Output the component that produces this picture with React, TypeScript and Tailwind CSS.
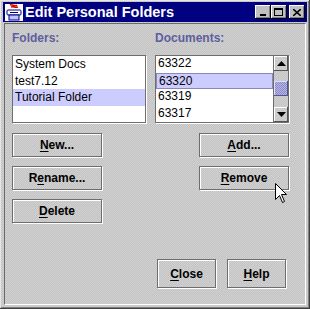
import React from "react";

const dither =
  "bg-[image:repeating-conic-gradient(#c2c2c2_0%_25%,#d2d2d2_0%_50%)] bg-[length:2px_2px]";

function Btn({
  children,
  className,
}: {
  children: React.ReactNode;
  className: string;
}) {
  return (
    <div
      className={
        "flex items-center justify-center border border-[#6e6e6e] shadow-[1px_1px_0_#ffffff,inset_1px_1px_0_#ffffff] text-[12px] font-bold text-black leading-none " +
        className
      }
    >
      {children}
    </div>
  );
}

function U({ c }: { c: string }) {
  return <span className="underline underline-offset-[2px]">{c}</span>;
}

function WinBtn({ children }: { children: React.ReactNode }) {
  return (
    <div className="w-[16px] h-[14px] bg-[#c0c0c0] shadow-[inset_-1px_-1px_0_#000000,inset_1px_1px_0_#ffffff,inset_-2px_-2px_0_#808080] flex items-center justify-center">
      {children}
    </div>
  );
}

function ScrollBtn({ up }: { up: boolean }) {
  return (
    <div className="h-[15px] bg-[#cccccc] shadow-[inset_-1px_-1px_0_#555555,inset_1px_1px_0_#ffffff] flex items-center justify-center">
      <svg width="9" height="5" viewBox="0 0 9 5">
        {up ? (
          <polygon points="4.5,0 9,5 0,5" fill="#000" />
        ) : (
          <polygon points="0,0 9,0 4.5,5" fill="#000" />
        )}
      </svg>
    </div>
  );
}

export default function App() {
  const folders = ["System Docs", "test7.12", "Tutorial Folder"];
  const docs = ["63322", "63320", "63319", "63317"];
  return (
    <div
      className={
        "relative w-[310px] h-[309px] flex flex-col pt-[2px] pl-[3px] pr-[3px] pb-[4px] shadow-[inset_-1px_-1px_0_#404040,inset_1px_1px_0_#e6e6e6,inset_-2px_-2px_0_#808080] " +
        dither
      }
      style={{ fontFamily: '"Liberation Sans", Arial, sans-serif' }}
    >
      {/* Title bar */}
      <div className="h-[20px] bg-[#000080] flex items-center pl-[2px] pr-[2px] shrink-0">
        <svg width="18" height="17" viewBox="0 0 18 17" className="shrink-0">
          <rect x="0" y="0" width="18" height="17" fill="#ffffff" />
          <path d="M5 1 C7 0 10 3 12 1 M6 3 C8 2 10 4 13 3" stroke="#e00000" strokeWidth="1.5" fill="none" />
          <rect x="2" y="6" width="14" height="5" rx="1" fill="#ffffff" stroke="#000080" strokeWidth="1" />
          <rect x="4" y="11" width="10" height="5" fill="#c0c0ff" stroke="#000080" strokeWidth="1" />
          <line x1="5" y1="8.5" x2="13" y2="8.5" stroke="#000080" />
        </svg>
        <div className="ml-[2px] text-white font-bold text-[14.5px] leading-none tracking-[0px]">
          Edit Personal Folders
        </div>
        <div className="ml-auto flex items-center">
          <WinBtn>
            <div className="w-[6px] h-[2px] bg-black mt-[5px] mr-[1px]" />
          </WinBtn>
          <WinBtn>
            <div className="w-[9px] h-[8px] border border-black border-t-2 mr-[1px]" />
          </WinBtn>
          <div className="w-[2px]" />
          <WinBtn>
            <svg width="8" height="7" viewBox="0 0 8 7">
              <path d="M0 0 L8 7 M8 0 L0 7" stroke="#000" strokeWidth="1.6" />
            </svg>
          </WinBtn>
        </div>
      </div>

      {/* Content panel */}
      <div className="mt-[1px] ml-[1px] mr-[1px] flex-1 flex flex-col border-l border-t border-[#6a6a6a] border-r-white border-b-white border-r border-b pl-[7px] pt-[7px]">
        <div className="grid grid-cols-[134px_134px] gap-x-[9px]">
          <div className="text-[12px] font-bold text-[#5e5e9e] leading-[14px]">Folders:</div>
          <div className="text-[12px] font-bold text-[#5e5e9e] leading-[14px]">Documents:</div>

          {/* Folder list */}
          <div className="mt-[10px] h-[68px] bg-white border border-[#6e6e6e] shadow-[1px_1px_0_#ffffff] text-[12px] text-black">
            {folders.map((f, i) => (
              <div
                key={f}
                className={
                  "h-[16.5px] leading-[16px] pl-[2px] " + (i === 2 ? "bg-[#ccccff]" : "")
                }
              >
                {f}
              </div>
            ))}
          </div>

          {/* Documents list */}
          <div className="mt-[10px] h-[68px] flex border border-[#6e6e6e] shadow-[1px_1px_0_#ffffff] text-[12px] text-black">
            <div className="flex-1 bg-white">
              {docs.map((d, i) => (
                <div
                  key={d}
                  className={
                    "h-[16.5px] leading-[15px] pl-[2px] " +
                    (i === 1 ? "bg-[#ccccff] border border-[#8888bb] pl-[1px]" : "")
                  }
                >
                  {d}
                </div>
              ))}
            </div>
            <div className={"w-[15px] flex flex-col border-l border-[#6e6e6e] " + dither}>
              <ScrollBtn up={true} />
              <div className="h-[10px]" />
              <div className="h-[15px] bg-[image:repeating-conic-gradient(#8c8cc8_0%_25%,#b4b4e6_0%_50%)] bg-[length:2px_2px] shadow-[inset_-1px_-1px_0_#555588,inset_1px_1px_0_#ddddff]" />
              <div className="flex-1" />
              <ScrollBtn up={false} />
            </div>
          </div>

          {/* Buttons */}
          <div className="mt-[10px] flex flex-col gap-[9px] items-start">
            <Btn className="w-[90px] h-[24px]">
              <span>
                <U c="N" />ew...
              </span>
            </Btn>
            <Btn className="w-[90px] h-[24px]">
              <span>
                R<U c="e" />name...
              </span>
            </Btn>
            <Btn className="w-[90px] h-[24px]">
              <span>
                <U c="D" />elete
              </span>
            </Btn>
          </div>
          <div className="mt-[10px] flex flex-col gap-[9px] items-end">
            <Btn className="w-[90px] h-[24px]">
              <span>
                <U c="A" />dd...
              </span>
            </Btn>
            <Btn className="w-[90px] h-[24px]">
              <span>
                <U c="R" />emove
              </span>
            </Btn>
          </div>
        </div>

        <div className="mt-auto mb-[16px] mr-[19px] flex justify-end gap-[11px]">
          <Btn className="w-[59px] h-[29px]">
            <span>
              <U c="C" />lose
            </span>
          </Btn>
          <Btn className="w-[59px] h-[29px]">
            <span>
              <U c="H" />elp
            </span>
          </Btn>
        </div>
      </div>

      {/* Mouse cursor */}
      <svg
        className="absolute left-[275px] top-[183px]"
        width="13"
        height="21"
        viewBox="0 0 13 21"
      >
        <path
          d="M0.5 0.5 L0.5 16.5 L4.5 12.5 L7.5 19.5 L9.5 18.5 L6.5 11.5 L11.5 11.5 Z"
          fill="#ffffff"
          stroke="#000000"
          strokeWidth="1"
        />
      </svg>
    </div>
  );
}
